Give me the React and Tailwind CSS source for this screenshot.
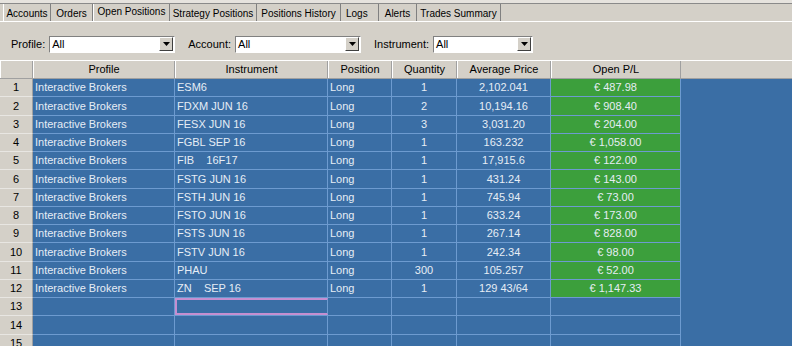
import React from 'react';

const tabs = [
  { t: 'Accounts', w: 'w-[48px]' },
  { t: 'Orders', w: 'w-[42px]' },
  { t: 'Open Positions', w: 'w-[77px]' },
  { t: 'Strategy Positions', w: 'w-[87px]' },
  { t: 'Positions History', w: 'w-[84px]' },
  { t: 'Logs', w: 'w-[38px]' },
  { t: 'Alerts', w: 'w-[38px]' },
  { t: 'Trades Summary', w: 'w-[84px]' },
];

const rows = [
  ['ESM6', '1', '2,102.041', '€ 487.98'],
  ['FDXM JUN 16', '2', '10,194.16', '€ 908.40'],
  ['FESX JUN 16', '3', '3,031.20', '€ 204.00'],
  ['FGBL SEP 16', '1', '163.232', '€ 1,058.00'],
  ['FIB    16F17', '1', '17,915.6', '€ 122.00'],
  ['FSTG JUN 16', '1', '431.24', '€ 143.00'],
  ['FSTH JUN 16', '1', '745.94', '€ 73.00'],
  ['FSTO JUN 16', '1', '633.24', '€ 173.00'],
  ['FSTS JUN 16', '1', '267.14', '€ 828.00'],
  ['FSTV JUN 16', '1', '242.34', '€ 98.00'],
  ['PHAU', '300', '105.257', '€ 52.00'],
  ['ZN    SEP 16', '1', '129 43/64', '€ 1,147.33'],
];

function Select({ label, width }) {
  return (
    <div className="flex items-center gap-[4px]">
      <span>{label}</span>
      <div
        className={`${width} h-[17px] flex items-center bg-white border border-t-[#808080] border-l-[#808080] border-r-[#ffffff] border-b-[#ffffff]`}
      >
        <span className="flex-1 pl-[2px] leading-none">All</span>
        <div className="w-[14px] h-[14px] mr-[1px] bg-[#d4d0c8] border border-t-white border-l-white border-r-[#404040] border-b-[#404040] flex items-center justify-center">
          <svg width="7" height="4" viewBox="0 0 7 4">
            <path d="M0 0h7L3.5 4z" fill="#000" />
          </svg>
        </div>
      </div>
    </div>
  );
}

function HeaderCell({ w, children }) {
  return (
    <div
      className={`${w} shrink-0 h-full flex items-center justify-center border-r border-r-[#a0a0a0] border-l border-l-white`}
    >
      {children}
    </div>
  );
}

function Cell({ w, align = 'justify-start', green, selected, children }) {
  return (
    <div
      className={`${w} shrink-0 h-full flex items-center ${align} px-[2px] whitespace-pre border-r border-r-[#6d9bd0] ${
        green ? 'bg-[#3c9f3c]' : ''
      } ${selected ? 'border-2 border-[#c58fd0]' : ''}`}
    >
      {children}
    </div>
  );
}

export default function App() {
  const allRows = [...rows, null, null, null];
  return (
    <div
      className="w-[792px] h-[346px] overflow-hidden bg-[#d4d0c8] text-[11px] text-black flex flex-col"
      style={{ fontFamily: '"Liberation Sans", Tahoma, sans-serif' }}
    >
      {/* tabs */}
      <div className="h-[4px] shrink-0 border-b border-b-[#8a8a8a] bg-[#e6e3de]" />
      <div className="h-[18px] shrink-0 flex items-end border-b border-b-white pl-[3px] text-[10px]">
        {tabs.map(({ t, w }, i) => {
          const active = t === 'Open Positions';
          return (
            <div
              key={t}
              className={`${w} h-full flex items-center border-r border-r-[#808080] ${
                active ? 'pb-[3px] justify-center border-l border-l-white' : 'pt-[2px]'
              } ${t === 'Logs' ? 'pl-[5px]' : active ? '' : 'justify-center'} ${
                i === 0 ? 'border-l border-l-white' : ''
              }`}
            >
              {t}
            </div>
          );
        })}
      </div>

      {/* filters */}
      <div className="h-[38px] shrink-0 flex items-center pl-[11px] gap-[13px] pt-[6px]">
        <Select label="Profile:" width="w-[126px]" />
        <Select label="Account:" width="w-[126px]" />
        <Select label="Instrument:" width="w-[100px]" />
      </div>

      {/* grid */}
      <div className="flex-1 flex flex-col">
        <div className="h-[19px] shrink-0 flex bg-[#d4d0c8] border-t border-t-white border-b border-b-[#a0a0a0]">
          <HeaderCell w="w-[33px]" />
          <HeaderCell w="w-[142px]">Profile</HeaderCell>
          <HeaderCell w="w-[153px]">Instrument</HeaderCell>
          <HeaderCell w="w-[64px]">Position</HeaderCell>
          <HeaderCell w="w-[65px]">Quantity</HeaderCell>
          <HeaderCell w="w-[94px]">Average Price</HeaderCell>
          <HeaderCell w="w-[130px]">Open P/L</HeaderCell>
          <div className="flex-1" />
        </div>
        {allRows.map((r, i) => (
          <div key={i} className="h-[18.25px] flex shrink-0 bg-[#3a6ea5] text-[#e6edf5]">
            <div className="w-[33px] shrink-0 h-full flex items-center justify-center bg-[#d4d0c8] text-black border-b border-b-[#e8e6e2] border-r border-r-[#a0a0a0]">
              {i + 1}
            </div>
            <div className="flex border-b border-b-[#6d9bd0] h-full">
              <Cell w="w-[142px]">{r ? 'Interactive Brokers' : ''}</Cell>
              <Cell w="w-[153px]" selected={i === 12}>
                {r ? r[0] : ''}
              </Cell>
              <Cell w="w-[64px]">{r ? 'Long' : ''}</Cell>
              <Cell w="w-[65px]" align="justify-center">
                {r ? r[1] : ''}
              </Cell>
              <Cell w="w-[94px]" align="justify-center">
                {r ? r[2] : ''}
              </Cell>
              <Cell w="w-[130px]" align="justify-center" green={!!r}>
                {r ? r[3] : ''}
              </Cell>
            </div>
            <div className="flex-1" />
          </div>
        ))}
      </div>
    </div>
  );
}
